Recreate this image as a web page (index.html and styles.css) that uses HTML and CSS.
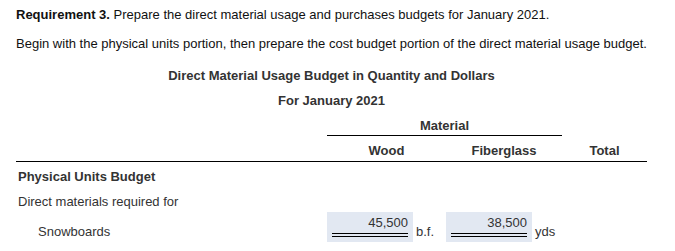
FILE: index.html
```html
<!DOCTYPE html>
<html>
<head>
<meta charset="utf-8">
<link rel="stylesheet" href="styles.css">
</head>
<body>
<div class="page">
  <p class="req"><b>Requirement 3.</b> Prepare the direct material usage and purchases budgets for January 2021.</p>
  <p class="instr">Begin with the physical units portion, then prepare the cost budget portion of the direct material usage budget.</p>
  <div class="budget">
    <div class="cell title span4">Direct Material Usage Budget in Quantity and Dollars</div>
    <div class="cell title span4">For January 2021</div>

    <div class="cell"></div>
    <div class="cell material span2">Material</div>
    <div class="cell"></div>

    <div class="cell head"></div>
    <div class="cell head">Wood</div>
    <div class="cell head">Fiberglass</div>
    <div class="cell head">Total</div>

    <div class="cell section label">Physical Units Budget</div>
    <div class="cell"></div>
    <div class="cell"></div>
    <div class="cell"></div>

    <div class="cell line label">Direct materials required for</div>
    <div class="cell"></div>
    <div class="cell"></div>
    <div class="cell"></div>

    <div class="cell entry label indent">Snowboards</div>
    <div class="cell entry"><span class="box"><span class="num">45,500</span><span class="dbl"></span></span><span class="unit">b.f.</span></div>
    <div class="cell entry"><span class="box"><span class="num">38,500</span><span class="dbl"></span></span><span class="unit">yds</span></div>
    <div class="cell entry"></div>
  </div>
</div>
</body>
</html>
```
FILE: styles.css
```css
html, body {
  margin: 0;
  padding: 0;
  background: #fff;
}
body {
  font-family: "Liberation Sans", Arial, sans-serif;
  font-size: 13px;
  color: #000;
}
.page {
  padding: 6px 16px 0 16px;
}
.req, .instr {
  margin: 0;
  line-height: 18px;
  color: #111;
}
.instr {
  margin-top: 11px;
}
.budget {
  margin-top: 10px;
  width: 631px;
  display: grid;
  grid-template-columns: 311px 119px 116px 85px;
  grid-template-rows: 25px 25px 23px 26px 28px 22px 39px;
  color: #333;
  line-height: 15px;
}
.cell {
  display: flex;
  align-items: center;
  box-sizing: border-box;
  min-width: 0;
}
.span4 { grid-column: span 4; }
.span2 { grid-column: span 2; }
.title {
  justify-content: center;
  font-weight: bold;
}
.material {
  justify-content: center;
  align-items: flex-end;
  padding-bottom: 2px;
  font-weight: bold;
  border-bottom: 1px solid #000;
}
.head {
  justify-content: center;
  align-items: flex-end;
  padding-bottom: 3px;
  font-weight: bold;
  border-bottom: 1px solid #000;
}
.section {
  font-weight: bold;
  padding-top: 1px;
}
.label { padding-left: 2px; }
.indent { padding-left: 22px; }
.entry {
  align-items: flex-start;
}
.entry.indent { padding-top: 12px; }
.box {
  display: flex;
  flex-direction: column;
  width: 86px;
  box-sizing: border-box;
  padding: 3px 5px 5px 5px;
  background: #e2e8f2;
}
.num {
  display: block;
  text-align: right;
  line-height: 15px;
}
.dbl {
  display: block;
  height: 2px;
  margin-top: 3px;
  border-top: 1px solid #000;
  border-bottom: 1px solid #000;
}
.unit {
  margin-left: 3px;
  margin-top: 12px;
}
```
